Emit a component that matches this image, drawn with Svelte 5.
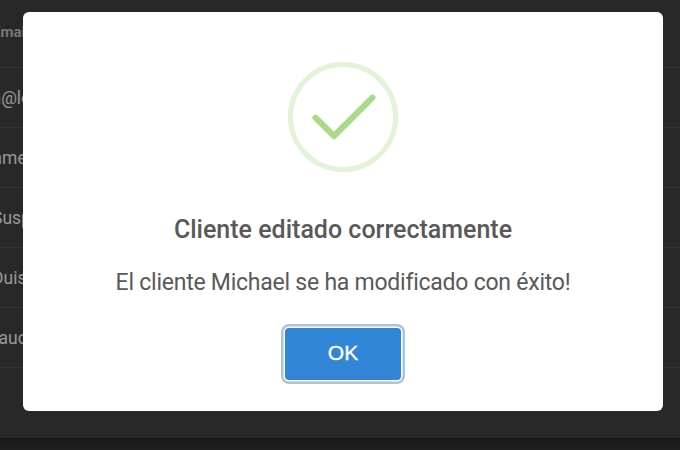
<script>
  const rows = ['lorem@lorem.com', 'fames@ac.com', 'Suspendisse', 'Duis', 'faucibus'];
  const shifts = [43.5, 13.5, 8, 8, 7.5];
</script>

<main>
  <section class="table" aria-hidden="true">
    <div class="row head"><span style="margin-left: -8px">Email</span></div>
    {#each rows as row, i}
      <div class="row"><span style={`margin-left: ${-shifts[i]}px`}>{row}</span></div>
    {/each}
  </section>

  <div class="overlay">
    <div class="modal" role="dialog" aria-modal="true" aria-labelledby="title">
      <svg class="icon" width="110" height="110" viewBox="0 0 110 110" fill="none" aria-hidden="true">
        <circle cx="55" cy="55" r="52.5" stroke="#e2f3d9" stroke-width="5" />
        <path d="M27.5 55.7 46 74 84.5 35.7" stroke="#a5dc86" stroke-width="6" stroke-linecap="round" stroke-linejoin="round" />
      </svg>
      <h2 id="title">Cliente editado correctamente</h2>
      <p>El cliente Michael se ha modificado con éxito!</p>
      <button>OK</button>
    </div>
  </div>
</main>

<style>
  :global(body) { margin: 0; overflow: hidden; }
  main {
    position: relative;
    width: 680px;
    height: 450px;
    overflow: hidden;
    background: #1f1f1f;
    font-family: Roboto, "Liberation Sans", sans-serif;
  }
  .table {
    height: 438px;
    background: #282828;
    box-shadow: 0 2px 5px #151515;
    color: #989898;
    font-size: 17.5px;
  }
  .row {
    box-sizing: border-box;
    height: 60px;
    border-bottom: 1px solid #353535;
    display: flex;
    align-items: center;
    white-space: nowrap;
  }
  .head {
    height: 68px;
    padding-bottom: 4px;
    color: #777;
    font-size: 15px;
    font-weight: 700;
  }
  .overlay {
    position: absolute;
    inset: 0;
    padding: 12px 17px 0 23px;
  }
  .modal {
    box-sizing: border-box;
    height: 399px;
    padding-top: 50px;
    border-radius: 6px;
    background: #fff;
    display: flex;
    flex-direction: column;
    align-items: center;
    color: #595959;
  }
  .icon { flex: none; }
  h2 {
    margin: 42px 0 0;
    font-size: 25px;
    line-height: 32px;
    font-weight: 500;
    white-space: nowrap;
  }
  p {
    margin: 21px 0 0;
    font-size: 23px;
    letter-spacing: -0.24px;
    line-height: 32px;
    white-space: nowrap;
  }
  button {
    width: 116px;
    height: 52px;
    margin: 29px 0 0;
    padding: 0 0 2px;
    border: 0;
    border-radius: 4px;
    background: #3085d6;
    box-shadow: 0 0 0 1.5px #fff, 0 0 0 4px #adc3d7;
    color: #fff;
    font-family: "Liberation Sans", Arial, sans-serif;
    font-size: 21px;
    -webkit-text-stroke: 0.35px #fff;
  }
</style>
